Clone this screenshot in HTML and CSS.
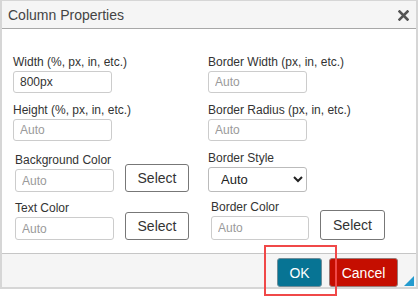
FILE: index.html
```html
<!DOCTYPE html>
<html lang="en">
<head>
  <meta charset="UTF-8" />
  <meta name="viewport" content="width=device-width, initial-scale=1.0"/>
  <title>Column Properties</title>
  <link rel="stylesheet" href="styles.css">
</head>
<body>
  <div class="dialog">
    <div class="titlebar">
      <span class="title">Column Properties</span>
      <svg class="close" width="11" height="11" viewBox="0 0 11 11">
        <path d="M1.5 1.5 L9.5 9.5 M9.5 1.5 L1.5 9.5" stroke="#555" stroke-width="2.6" stroke-linecap="square"/>
      </svg>
    </div>

    <div class="content">
      <div class="grid">
        <div class="field">
          <label>Width (%, px, in, etc.)</label>
          <input type="text" value="800px">
        </div>
        <div class="field">
          <label>Border Width (px, in, etc.)</label>
          <input type="text" placeholder="Auto">
        </div>

        <div class="field">
          <label>Height (%, px, in, etc.)</label>
          <input type="text" placeholder="Auto">
        </div>
        <div class="field">
          <label>Border Radius (px, in, etc.)</label>
          <input type="text" placeholder="Auto">
        </div>

        <div class="color-row shift">
          <div class="field">
            <label>Background Color</label>
            <input type="text" placeholder="Auto" class="tall">
          </div>
          <button class="select-btn">Select</button>
        </div>
        <div class="field">
          <label>Border Style</label>
          <select>
            <option>Auto</option>
          </select>
        </div>

        <div class="color-row shift last">
          <div class="field">
            <label>Text Color</label>
            <input type="text" placeholder="Auto" class="tall">
          </div>
          <button class="select-btn">Select</button>
        </div>
        <div class="color-row shift-more">
          <div class="field">
            <label>Border Color</label>
            <input type="text" placeholder="Auto" class="taller">
          </div>
          <button class="select-btn big">Select</button>
        </div>
      </div>
    </div>

    <div class="footer">
      <button class="btn ok">OK</button>
      <button class="btn cancel">Cancel</button>
    </div>

    <span class="grip"></span>
  </div>

  <!-- highlight drawn over the OK button -->
  <div class="highlight"></div>
</body>
</html>
```

FILE: styles.css
```css
body {
  margin: 0;
  font-family: 'Liberation Sans', Arial, sans-serif;
  background: #fff;
  color: #333;
}

.dialog {
  position: relative;
  width: 418px;
  box-sizing: border-box;
  border: 2px solid #d6d6d6;
  border-top-width: 1px;
  background: #fff;
}

.titlebar {
  display: flex;
  align-items: center;
  justify-content: space-between;
  height: 27px;
  padding: 0 7px 0 6px;
  background: #f5f5f5;
  border-bottom: 1px solid #a8a8a8;
}

.title {
  font-size: 14px;
  color: #444;
  padding-top: 1px;
}

.close {
  margin-top: 1px;
}

.content {
  height: 224px;
  box-sizing: border-box;
  padding: 26px 0 0 11px;
}

.grid {
  display: grid;
  grid-template-columns: 195px 1fr;
  row-gap: 10px;
}

.field {
  display: flex;
  flex-direction: column;
  align-items: flex-start;
}

.field label {
  font-size: 12px;
  line-height: 15px;
  margin-bottom: 1px;
  color: #333;
}

.field input {
  width: 99px;
  height: 22px;
  box-sizing: border-box;
  border: 1px solid #ccc;
  border-radius: 3px;
  padding: 0 6px;
  font-family: inherit;
  font-size: 12px;
  color: #333;
  outline: none;
}

.field input.tall {
  height: 23px;
}

.field input.taller {
  width: 98px;
  height: 24px;
}

.field input::placeholder {
  color: #9a9a9a;
}

.field select {
  width: 99px;
  height: 25px;
  box-sizing: border-box;
  border: 1px solid #bbb;
  border-radius: 3px;
  padding: 0 0 0 8px;
  font-family: inherit;
  font-size: 13px;
  color: #222;
  background: #fff;
}

.color-row {
  display: flex;
  align-items: flex-end;
  gap: 11px;
}

.color-row.shift {
  padding-left: 2px;
}

.color-row.last {
  margin-top: -3px;
}

.color-row.shift-more {
  padding-left: 3px;
  margin-top: -2px;
}

.select-btn {
  width: 64px;
  height: 28px;
  box-sizing: border-box;
  border: 1px solid #777;
  border-radius: 3px;
  background: #fff;
  font-family: inherit;
  font-size: 14px;
  color: #333;
  padding: 0;
}

.select-btn.big {
  width: 65px;
  height: 30px;
}

.footer {
  display: flex;
  justify-content: flex-end;
  gap: 7px;
  height: 34px;
  box-sizing: border-box;
  padding: 4px 18px 1px 0;
  background: #f5f5f5;
  border-top: 1px solid #c6c6c6;
}

.btn {
  height: 29px;
  box-sizing: border-box;
  border: 1px solid #8a8a8a;
  border-radius: 3px;
  font-family: inherit;
  font-size: 14px;
  color: #fff;
  padding: 0;
}

.btn.ok {
  width: 45px;
  background: #077494;
  border-color: #6e8d99;
}

.btn.cancel {
  width: 69px;
  background: #c50e00;
  border-color: #9a7a78;
}

.grip {
  position: absolute;
  right: 2px;
  bottom: 1px;
  width: 0;
  height: 0;
  border-left: 10px solid transparent;
  border-bottom: 10px solid #239bcf;
}

.highlight {
  position: absolute;
  left: 264px;
  top: 245px;
  width: 73px;
  height: 51px;
  box-sizing: border-box;
  border: 2px solid #f04848;
}
```
